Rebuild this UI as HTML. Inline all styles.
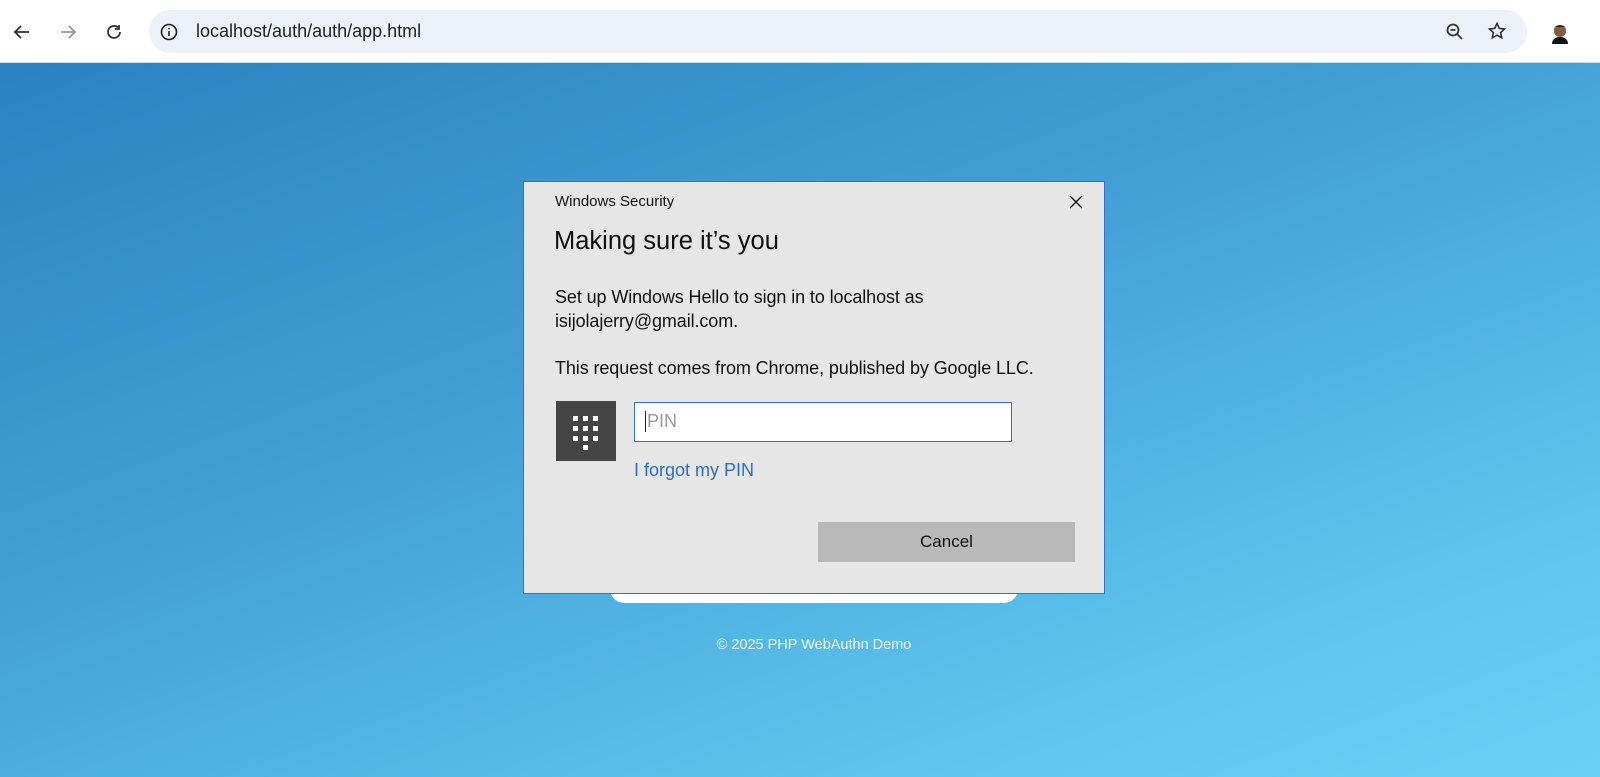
<!DOCTYPE html>
<html><head><meta charset="utf-8"><style>
*{margin:0;padding:0;box-sizing:border-box}
body{width:1600px;height:777px;overflow:hidden;font-family:"Liberation Sans",sans-serif;position:relative;background:#fff}
.bar{position:absolute;left:0;top:0;width:1600px;height:63px;background:#fff;border-bottom:1px solid #d6dbe2}
.pill{position:absolute;left:149px;top:10px;width:1378px;height:43px;border-radius:22px;background:#edf2fa}
.url{position:absolute;left:196px;top:21px;font-size:18px;color:#1f1f1f}
.bg{position:absolute;left:0;top:63px;width:1600px;height:714px;background:linear-gradient(160deg,#2c82bf 0%,#45a3d8 45%,#5ec6ee 80%,#68d2f6 100%)}
.card{position:absolute;left:610px;top:560px;width:408px;height:43px;background:#fff;border-radius:0 0 14px 14px}
.foot{position:absolute;left:0;width:1600px;text-align:center;top:637px;color:#eef6fc;font-size:14.5px;padding-left:28px}
.dlg{position:absolute;left:523px;top:181px;width:582px;height:413px;background:#e6e6e6;border:1px solid #2f72d6;color:#111}
.t1{position:absolute;left:31px;top:11px;font-size:15px}
.t2{position:absolute;left:30px;top:45px;font-size:25.5px}
.p{position:absolute;left:31px;font-size:18px;line-height:24px;letter-spacing:-0.1px}
.key{position:absolute;left:32px;top:219px;width:60px;height:60px;background:#444}
.inp{position:absolute;left:110px;top:220px;width:378px;height:40px;background:#fff;border:1.5px solid #2f6fd0}
.inp span{position:absolute;left:10px;top:8px;font-size:18px;color:#999;border-left:1.5px solid #222;padding-left:1px;line-height:21px}
.link{position:absolute;left:110px;top:278px;font-size:18px;color:#2a6fc7}
.btn{position:absolute;left:294px;top:340px;width:257px;height:40px;background:#b9b9b9;text-align:center;line-height:40px;font-size:17px}
.x{position:absolute;left:545px;top:13px}
</style></head><body>
<div class="bar">
<svg style="position:absolute;left:12px;top:22px" width="20" height="20" viewBox="0 0 20 20" fill="none" stroke="#333" stroke-width="1.8"><path d="M17 10H3M9 4L3 10l6 6"/></svg>
<svg style="position:absolute;left:58px;top:22px" width="20" height="20" viewBox="0 0 20 20" fill="none" stroke="#999" stroke-width="1.8"><path d="M3 10h14M11 4l6 6-6 6"/></svg>
<svg style="position:absolute;left:104px;top:22px" width="20" height="20" viewBox="0 0 20 20" fill="none" stroke="#333" stroke-width="1.8"><path d="M16 10a6 6 0 1 1-2-4.5"/><path d="M15 3v4h-4" /></svg>
<div class="pill"></div>
<svg style="position:absolute;left:159px;top:22px" width="20" height="20" viewBox="0 0 20 20" fill="none" stroke="#222" stroke-width="1.6"><circle cx="10" cy="10" r="7.5"/><path d="M10 9v5M10 6v1.2"/></svg>
<div class="url">localhost/auth/auth/app.html</div>
<svg style="position:absolute;left:1445px;top:22px" width="20" height="20" viewBox="0 0 20 20" fill="none" stroke="#333" stroke-width="1.8"><circle cx="8" cy="8" r="5.5"/><path d="M5.5 8h5M12 12l5 5"/></svg>
<svg style="position:absolute;left:1487px;top:21px" width="20" height="20" viewBox="0 0 20 20" fill="none" stroke="#333" stroke-width="1.6"><path d="M10 2.5l2.3 4.9 5.2.6-3.9 3.6 1.1 5.2L10 14.2l-4.7 2.6 1.1-5.2L2.5 8l5.2-.6z"/></svg>
<svg style="position:absolute;left:1549px;top:20px" width="22" height="24" viewBox="0 0 22 24"><path d="M3 24c0-5 4-7 8-7s8 2 8 7z" fill="#111"/><circle cx="11" cy="11" r="6" fill="#8a5a3c"/><path d="M5 9c0-5 12-5 12 0l-1-2H6z" fill="#222"/></svg>
</div>
<div class="bg"></div>
<div class="card"></div>
<div class="foot">© 2025 PHP WebAuthn Demo</div>
<div class="dlg">
<div class="t1">Windows Security</div>
<svg class="x" width="14" height="14" viewBox="0 0 14 14" stroke="#111" stroke-width="1.4"><path d="M1 1l12 12M13 1L1 13"/></svg>
<div class="t2">Making sure it’s you</div>
<div class="p" style="top:103px">Set up Windows Hello to sign in to localhost as<br>isijolajerry@gmail.com.</div>
<div class="p" style="top:174px">This request comes from Chrome, published by Google LLC.</div>
<div class="key"><svg width="60" height="60" viewBox="0 0 60 60" fill="#fff"><rect x="17" y="15" width="5" height="5"/><rect x="27" y="15" width="5" height="5"/><rect x="37" y="15" width="5" height="5"/><rect x="17" y="25" width="5" height="5"/><rect x="27" y="25" width="5" height="5"/><rect x="37" y="25" width="5" height="5"/><rect x="17" y="35" width="5" height="5"/><rect x="27" y="35" width="5" height="5"/><rect x="37" y="35" width="5" height="5"/><rect x="27" y="44" width="5" height="5"/></svg></div>
<div class="inp"><span>PIN</span></div>
<div class="link">I forgot my PIN</div>
<div class="btn">Cancel</div>
</div>
</body></html>
